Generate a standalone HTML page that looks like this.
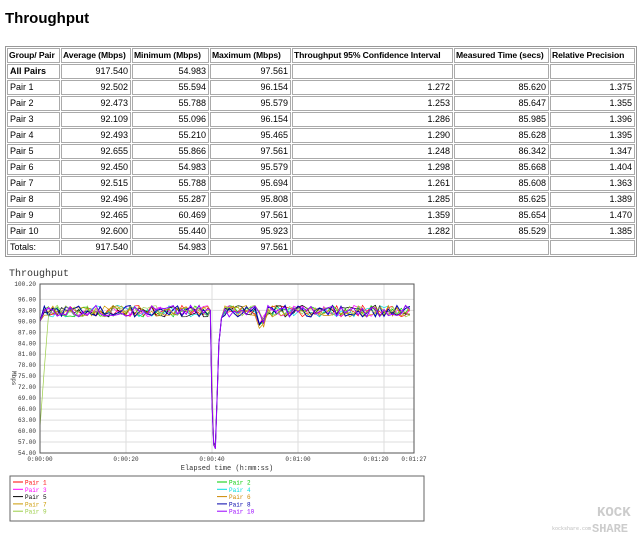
<!DOCTYPE html>
<html><head><style>
body{margin:0;background:#fff;width:640px;height:542px;overflow:hidden;font-family:"Liberation Sans",sans-serif;position:relative}
h1{position:absolute;left:5px;top:10px;margin:0;font-size:15px;font-weight:bold}
table{position:absolute;left:5px;top:46px;border-collapse:separate;border-spacing:1px;border:1px solid #999;font-size:9px;width:632px;table-layout:fixed}
td{border:1px solid #aaa;height:13px;padding:0 2px;text-align:right;white-space:nowrap;overflow:hidden;line-height:13px}
td:first-child{text-align:left}
tr.h td{font-weight:bold;text-align:left;font-size:8.6px;letter-spacing:-0.1px;padding:0 1px}
tr.b td:first-child{font-weight:bold}
svg{position:absolute;left:0;top:0}
svg text{font-family:"Liberation Mono",monospace}
</style></head><body>
<h1>Throughput</h1>
<table>
<colgroup><col style="width:53px"><col style="width:70px"><col style="width:77px"><col style="width:81px"><col style="width:161px"><col style="width:95px"><col></colgroup>
<tr class="h"><td>Group/ Pair</td><td>Average (Mbps)</td><td>Minimum (Mbps)</td><td>Maximum (Mbps)</td><td>Throughput 95% Confidence Interval</td><td>Measured Time (secs)</td><td>Relative Precision</td></tr>
<tr class="b"><td>All Pairs</td><td>917.540</td><td>54.983</td><td>97.561</td><td></td><td></td><td></td></tr>
<tr><td>Pair 1</td><td>92.502</td><td>55.594</td><td>96.154</td><td>1.272</td><td>85.620</td><td>1.375</td></tr>
<tr><td>Pair 2</td><td>92.473</td><td>55.788</td><td>95.579</td><td>1.253</td><td>85.647</td><td>1.355</td></tr>
<tr><td>Pair 3</td><td>92.109</td><td>55.096</td><td>96.154</td><td>1.286</td><td>85.985</td><td>1.396</td></tr>
<tr><td>Pair 4</td><td>92.493</td><td>55.210</td><td>95.465</td><td>1.290</td><td>85.628</td><td>1.395</td></tr>
<tr><td>Pair 5</td><td>92.655</td><td>55.866</td><td>97.561</td><td>1.248</td><td>86.342</td><td>1.347</td></tr>
<tr><td>Pair 6</td><td>92.450</td><td>54.983</td><td>95.579</td><td>1.298</td><td>85.668</td><td>1.404</td></tr>
<tr><td>Pair 7</td><td>92.515</td><td>55.788</td><td>95.694</td><td>1.261</td><td>85.608</td><td>1.363</td></tr>
<tr><td>Pair 8</td><td>92.496</td><td>55.287</td><td>95.808</td><td>1.285</td><td>85.625</td><td>1.389</td></tr>
<tr><td>Pair 9</td><td>92.465</td><td>60.469</td><td>97.561</td><td>1.359</td><td>85.654</td><td>1.470</td></tr>
<tr><td>Pair 10</td><td>92.600</td><td>55.440</td><td>95.923</td><td>1.282</td><td>85.529</td><td>1.385</td></tr>
<tr><td>Totals:</td><td>917.540</td><td>54.983</td><td>97.561</td><td></td><td></td><td></td></tr>
</table>
<svg id="c" width="640" height="542" xmlns="http://www.w3.org/2000/svg">
<text x="9" y="276" font-size="10" fill="#333">Throughput</text>
<g id="grid"></g>
<g id="series"></g>
<rect x="40" y="284" width="374" height="169" fill="none" stroke="#555" stroke-width="1"/>
<text x="8" y="375" font-size="6" fill="#333" transform="rotate(90 12 375)">Mbps</text>
<text x="227" y="470" font-size="7" text-anchor="middle" fill="#333">Elapsed time (h:mm:ss)</text>
<rect x="10" y="476" width="414" height="45" fill="none" stroke="#666"/>
<g id="leg"></g>
<text x="597" y="516" font-size="14" font-weight="bold" fill="#ccc">KOCK</text>
<text x="592" y="532" font-size="12" font-weight="bold" fill="#ccc">SHARE</text>
<text x="552" y="530" font-size="5" fill="#bbb">kockshare.com</text>
</svg>
<script>
var ns="http://www.w3.org/2000/svg";
function el(p,t,a,txt){var e=document.createElementNS(ns,t);for(var k in a)e.setAttribute(k,a[k]);if(txt)e.textContent=txt;document.getElementById(p).appendChild(e);}
function Y(v){return 284+(100.2-v)*3.658;}
function X(t){return 40+t*4.3;}
var labs=[54,57,60,63,66,69,72,75,78,81,84,87,90,93,96];
labs.forEach(function(v){el("grid","line",{x1:40,x2:414,y1:Y(v),y2:Y(v),stroke:"#ddd"});el("grid","text",{x:36,y:Y(v)+2,"font-size":6,"text-anchor":"end",fill:"#333"},v.toFixed(2));});
el("grid","text",{x:36,y:286,"font-size":6,"text-anchor":"end",fill:"#333"},"100.20");
[[0,"0:00:00"],[20,"0:00:20"],[40,"0:00:40"],[60,"0:01:00"],[80,"0:01:20"]].forEach(function(a){el("grid","line",{x1:X(a[0]),x2:X(a[0]),y1:284,y2:453,stroke:"#ddd"});el("grid","text",{x:X(a[0])-(a[0]==80?8:0),y:461,"font-size":6,"text-anchor":"middle",fill:"#333"},a[1]);});
el("grid","text",{x:414,y:461,"font-size":6,"text-anchor":"middle",fill:"#333"},"0:01:27");
var cols=["#f00","#0c0","#f0f","#0dd","#000","#c80","#c90","#00a","#9c4","#90f"];
var seed=7;function r(){seed=(seed*9301+49297)%233280;return seed/233280;}
for(var i=0;i<10;i++){var pts=[];var ts=[];
for(var t=0;t<39.5;t+=1)ts.push(t);ts.push(39.6,40.0,40.4,40.8,41.2,41.6,42.2);for(var t=43;t<=86;t+=1)ts.push(t);
ts.forEach(function(t){var v=92.8+(r()-0.5)*3.2;
if(t<0.5)v=i==8?61:90;else if(i==8&&t<2)v=61+t*16;
if(t>=39.5&&t<42.5){v={39.6:93,40.0:(i==8?75:68),40.4:56+r()*1.5,40.8:55+r()*1.5,41.2:70,41.6:84,42.2:91}[t];}
if(t>50&&t<53)v-=r()*4;
pts.push(X(t).toFixed(1)+","+Y(Math.min(97.5,v)).toFixed(1));});
el("series","polyline",{points:pts.join(" "),fill:"none",stroke:cols[i],"stroke-width":(i==9||i==7)?1:0.7});}
var names=["Pair 1","Pair 2","Pair 3","Pair 4","Pair 5","Pair 6","Pair 7","Pair 8","Pair 9","Pair 10"];
for(var i=0;i<10;i++){var x=i%2?217:13,y=482+Math.floor(i/2)*7.3;
el("leg","line",{x1:x,x2:x+10,y1:y,y2:y,stroke:cols[i]});
el("leg","text",{x:x+12,y:y+2.5,"font-size":6,fill:cols[i]},names[i]);}
</script>
</body></html>
